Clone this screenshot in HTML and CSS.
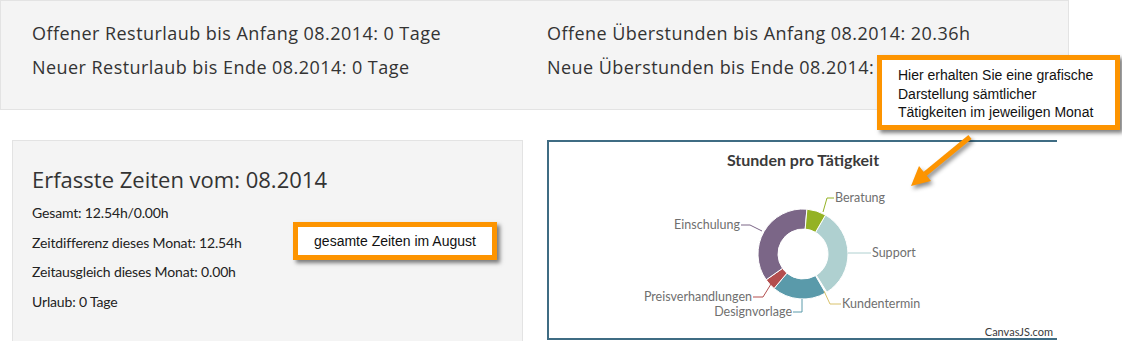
FILE: index.html
```html
<!DOCTYPE html>
<html lang="de">
<head>
  <meta charset="UTF-8" />
  <title>Zeiterfassung - Übersicht</title>
  <link rel="stylesheet" href="styles.css">
</head>
<body>

<div class="page">
  <section class="summary">
    <div>Offener Resturlaub bis Anfang 08.2014: 0 Tage</div>
    <div>Offene Überstunden bis Anfang 08.2014: 20.36h</div>
    <div>Neuer Resturlaub bis Ende 08.2014: 0 Tage</div>
    <div>Neue Überstunden bis Ende 08.2014: 20.36h</div>
  </section>

  <div class="content">
    <section class="times">
      <h2>Erfasste Zeiten vom: 08.2014</h2>
      <p>Gesamt: 12.54h/0.00h</p>
      <p>Zeitdifferenz dieses Monat: 12.54h</p>
      <p>Zeitausgleich dieses Monat: 0.00h</p>
      <p>Urlaub: 0 Tage</p>
    </section>

    <section class="chart">
      <svg width="508" height="196" viewBox="549 142 508 196">
        <text class="chart-title" x="803" y="166" text-anchor="middle">Stunden pro Tätigkeit</text>

        <g stroke="#fff" stroke-width="1">
          <!-- Support -->
          <path fill="#afd0d0" d="M825.5 215.03 A45 45 0 0 1 826.85 292.16 L816.25 275.2 A25 25 0 0 0 815.5 232.35 Z" />
          <!-- Designvorlage -->
          <path fill="#5a9aaa" d="M825.5 292.97 A45 45 0 0 1 774.07 288.47 L786.93 273.15 A25 25 0 0 0 815.5 275.65 Z" />
          <!-- Preisverhandlungen -->
          <path fill="#b34e4e" d="M774.07 288.47 A45 45 0 0 1 766.14 279.81 L782.52 268.34 A25 25 0 0 0 786.93 273.15 Z" />
          <!-- Einschulung -->
          <path fill="#7b6687" d="M766.14 279.81 A45 45 0 0 1 806.92 209.17 L805.18 229.1 A25 25 0 0 0 782.52 268.34 Z" />
          <!-- Beratung -->
          <path fill="#94b224" d="M806.92 209.17 A45 45 0 0 1 825.5 215.03 L815.5 232.35 A25 25 0 0 0 805.18 229.1 Z" />
        </g>

        <g fill="none" stroke-width="1">
          <polyline stroke="#94b224" points="823,212 827,198 834,198" />
          <polyline stroke="#7b6687" points="762,231 750,225 741,225" />
          <polyline stroke="#afd0d0" points="848,253 871,253" />
          <polyline stroke="#d9c26c" points="824,291 830,304 841,304" />
          <polyline stroke="#5a9aaa" points="802,299 802,312 793,312" />
          <polyline stroke="#b34e4e" points="771,284 763,297 753,297" />
        </g>

        <g class="chart-label">
          <text x="835" y="202">Beratung</text>
          <text x="740" y="229" text-anchor="end">Einschulung</text>
          <text x="872" y="257">Support</text>
          <text x="842" y="308">Kundentermin</text>
          <text x="792" y="316" text-anchor="end">Designvorlage</text>
          <text x="752" y="301" text-anchor="end">Preisverhandlungen</text>
        </g>

        <text class="chart-credit" x="1053" y="336" text-anchor="end">CanvasJS.com</text>
      </svg>
    </section>
  </div>

  <div class="callout callout-chart">Hier erhalten Sie eine grafische Darstellung sämtlicher Tätigkeiten im jeweiligen Monat</div>

  <svg class="arrow" width="80" height="70" viewBox="900 130 80 70">
    <line x1="970" y1="137" x2="925" y2="174" stroke="#fd9400" stroke-width="5" />
    <polygon fill="#fd9400" points="911,186 931,181 919,166" />
  </svg>

  <div class="callout callout-times">gesamte Zeiten im August</div>
</div>

</body>
</html>
```

FILE: styles.css
```css
* { box-sizing: border-box; }

body {
  margin: 0;
  font-family: 'Open Sans', 'DejaVu Sans', sans-serif;
  background: #ffffff;
  color: #333;
  overflow: hidden;
}

.page {
  position: relative;
  height: 341px;
  overflow: hidden;
}

.summary {
  width: 1069px;
  height: 110px;
  background: #f4f4f4;
  border: 1px solid #e3e3e3;
  padding: 15px 0 0 31px;
  display: grid;
  grid-template-columns: 515px 1fr;
  align-content: start;
  font-size: 18px;
  letter-spacing: 0.45px;
  line-height: 34px;
  color: #333;
}

.content {
  display: flex;
  gap: 24px;
  margin-top: 30px;
  padding-left: 12px;
}

.times {
  width: 511px;
  height: 205px;
  background: #f4f4f4;
  border: 1px solid #e3e3e3;
  border-bottom: none;
  padding: 23px 0 0 19px;
}

.times h2 {
  margin: 0 0 4px;
  font-size: 22px;
  font-weight: 400;
  line-height: 30px;
  color: #333;
}

.times p {
  margin: 0;
  font-family: Lato, 'Open Sans', sans-serif;
  font-size: 14px;
  letter-spacing: -0.15px;
  line-height: 29.6px;
  color: #222;
}

.chart {
  width: 510px;
  height: 200px;
  border: 2px solid #3f6c83;
  border-right: none;
  background: #ffffff;
}

.chart svg {
  display: block;
}

.chart-title {
  font-family: Lato, sans-serif;
  font-weight: 700;
  font-size: 16px;
  fill: #3a3a3a;
}

.chart-label text {
  font-family: Lato, sans-serif;
  font-size: 12.5px;
  fill: #6f6f6f;
}

.chart-credit {
  font-family: Lato, sans-serif;
  font-size: 11px;
  fill: #3a3a3a;
}

.callout {
  position: absolute;
  background: #ffffff;
  border: 5px solid #fd9400;
  box-shadow: 3px 3px 4px rgba(0, 0, 0, 0.5);
  font-family: 'Liberation Sans', Arial, sans-serif;
  font-size: 14px;
  color: #111;
}

.callout-chart {
  left: 877px;
  top: 55px;
  width: 243px;
  height: 75px;
  padding: 6px 10px 0 16px;
  line-height: 18.5px;
}

.callout-times {
  left: 293px;
  top: 222px;
  width: 204px;
  height: 38px;
  line-height: 28px;
  text-align: center;
}

.arrow {
  position: absolute;
  left: 900px;
  top: 130px;
  filter: drop-shadow(2px 3px 2px rgba(0, 0, 0, 0.45));
}
```
